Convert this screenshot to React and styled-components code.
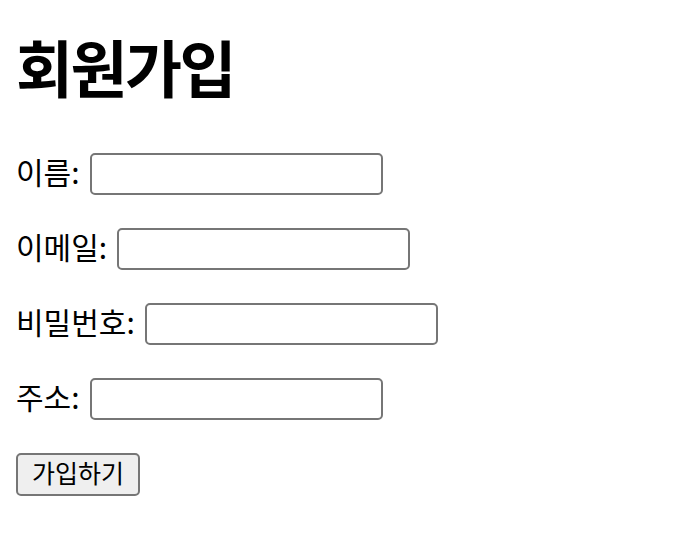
import React from "react";
import styled, { createGlobalStyle } from "styled-components";

const Global = createGlobalStyle`
  html, body { margin: 0; padding: 0; background: #fff; }
  body { font-family: "Noto Sans CJK KR", "Noto Sans", sans-serif; color: #000; }
`;

const Page = styled.div`
  padding: 0 16px;
`;

const Title = styled.h1`
  margin: 0;
  padding-top: 24px;
  height: 104px;
  box-sizing: border-box;
  font-size: 62px;
  line-height: 84px;
  font-weight: 700;
  letter-spacing: -2.5px;
`;

const Form = styled.form`
  display: flex;
  flex-direction: column;
  gap: 33px;
  padding-top: 49px;
`;

const Row = styled.div`
  display: flex;
  align-items: center;
  height: 42px;
  gap: 10px;
`;

const Label = styled.label`
  font-size: 30px;
  line-height: 42px;
  margin-top: -6px;
`;

const Input = styled.input`
  box-sizing: border-box;
  width: 293px;
  height: 42px;
  border: 2px solid #767676;
  border-radius: 5px;
  padding: 2px 4px;
  background: #fff;
  font-size: 26px;
  outline: none;
`;

const Button = styled.button`
  align-self: flex-start;
  box-sizing: border-box;
  width: 124px;
  height: 43px;
  border: 2px solid #767676;
  border-radius: 5px;
  background: #efefef;
  font-family: "Noto Sans CJK KR", sans-serif;
  font-size: 25px;
  line-height: 1;
  padding: 0 0 4px;
  color: #000;
`;

const fields = [
  { id: "name", label: "이름:", type: "text" },
  { id: "email", label: "이메일:", type: "email" },
  { id: "password", label: "비밀번호:", type: "password" },
  { id: "address", label: "주소:", type: "text" },
];

export default function App() {
  return (
    <Page>
      <Global />
      <Title>회원가입</Title>
      <Form onSubmit={(e) => e.preventDefault()}>
        {fields.map((f) => (
          <Row key={f.id}>
            <Label htmlFor={f.id}>{f.label}</Label>
            <Input id={f.id} type={f.type} />
          </Row>
        ))}
        <Button type="submit">가입하기</Button>
      </Form>
    </Page>
  );
}
